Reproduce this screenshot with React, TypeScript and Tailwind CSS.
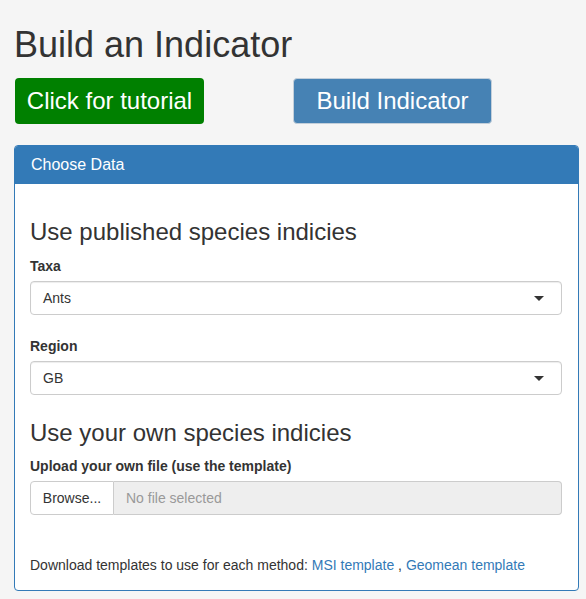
import { ChangeEvent } from "react";

const Caret = () => (
  <span className="absolute right-[17px] top-1/2 -mt-[2px] h-0 w-0 border-x-[5px] border-t-[5px] border-x-transparent border-t-[#333]" />
);

const SelectBox = ({ value }: { value: string }) => (
  <div className="relative h-[34px] w-full rounded-[4px] border border-[#ccc] bg-white px-3 text-[14px] leading-[32px] text-[#333] shadow-[inset_0_1px_1px_rgba(0,0,0,0.075)]">
    {value}
    <Caret />
  </div>
);

export default function App() {
  const onFile = (_e: ChangeEvent<HTMLInputElement>) => {};

  return (
    <div className="min-h-[599px] bg-[#f5f5f5] px-[14px] pb-2 pt-[25px] font-['Liberation_Sans',Arial,sans-serif] text-[14px] text-[#333]">
      <h1 className="text-[36px] leading-[40px] text-[#333]">Build an Indicator</h1>

      <div className="mt-[13px] flex items-start">
        <button className="ml-px h-[46px] w-[189px] rounded-[4px] bg-[#008000] text-[24px] text-white">
          Click for tutorial
        </button>
        <button className="ml-[89px] h-[46px] w-[199px] rounded-[4px] border border-[#c3cfda] bg-[#4682b4] text-[24px] text-white">
          Build Indicator
        </button>
      </div>

      <div className="mt-[21px] w-[565px] rounded-[4px] border border-[#337ab7] bg-white">
        <div className="h-[38px] rounded-t-[3px] bg-[#337ab7] px-[16px] text-[16px] leading-[37px] text-white">
          Choose Data
        </div>

        <div className="px-[15px] pb-[15px] pt-[35px]">
          <h3 className="text-[24px] leading-[26px]">Use published species indicies</h3>

          <label className="mt-[11px] block text-[14px] font-bold leading-[20px]">Taxa</label>
          <div className="mt-[5px] pr-px">
            <SelectBox value="Ants" />
          </div>

          <label className="mt-[21px] block text-[14px] font-bold leading-[20px]">Region</label>
          <div className="mt-[5px] pr-px">
            <SelectBox value="GB" />
          </div>

          <h3 className="mt-[25px] text-[24px] leading-[26px]">Use your own species indicies</h3>

          <label className="mt-[10px] block text-[14px] font-bold leading-[20px]">
            Upload your own file (use the template)
          </label>
          <div className="mt-[5px] flex h-[34px] pr-px">
            <label className="flex w-[84px] shrink-0 cursor-pointer items-center justify-center rounded-l-[4px] border border-[#ccc] bg-white text-[14px] text-[#333]">
              Browse...
              <input type="file" className="hidden" onChange={onFile} />
            </label>
            <div className="flex flex-1 items-center rounded-r-[4px] border border-l-0 border-[#ccc] bg-[#eee] px-3 text-[14px] text-[#999]">
              No file selected
            </div>
          </div>

          <p className="mt-[40px] text-[14px] leading-[20px]">
            Download templates to use for each method:{" "}
            <a href="#" className="text-[#337ab7]">MSI template</a> ,{" "}
            <a href="#" className="text-[#337ab7]">Geomean template</a>
          </p>
        </div>
      </div>
    </div>
  );
}
